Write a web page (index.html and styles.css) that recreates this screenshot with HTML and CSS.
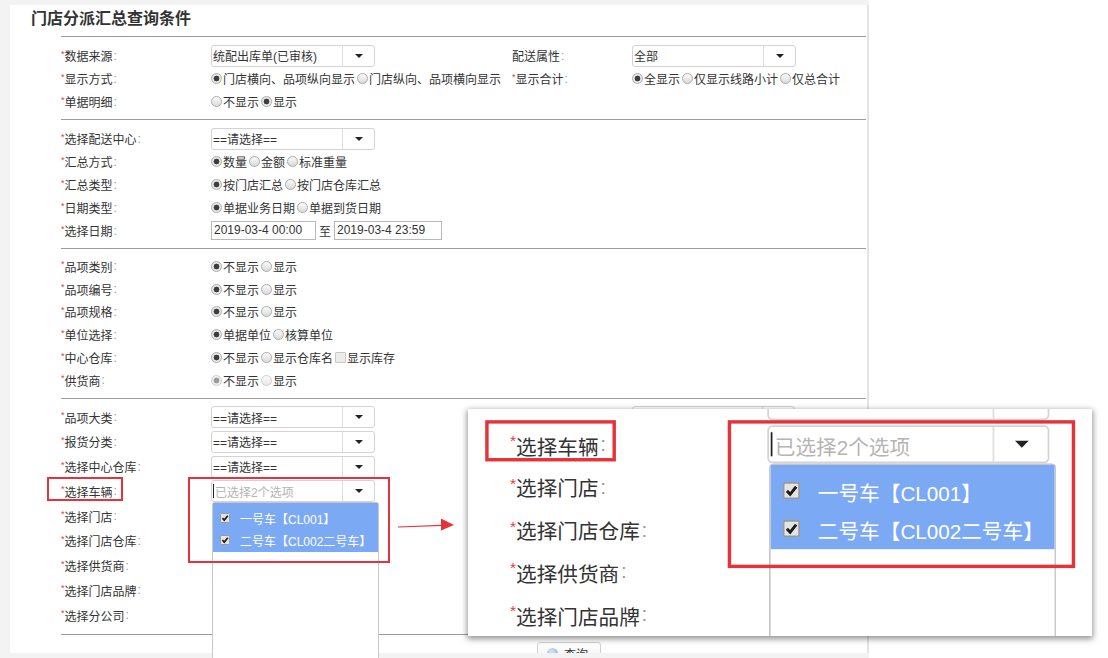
FILE: index.html
```html
<!DOCTYPE html>
<html lang="zh-CN">

<head>
    <meta charset="utf-8">
    <title>门店分派汇总查询条件</title>
    <link rel="stylesheet" href="styles.css">
</head>

<body>
    <div class="page">
        <div class="panel">
            <h1 class="panel-title">门店分派汇总查询条件</h1>

            <div class="section sec-a">
                <div class="row">
                    <span class="label"><i>*</i>数据来源<em>:</em></span>
                    <div class="field">
                        <div class="combo"><span class="combo-text">统配出库单(已审核)</span><span class="combo-btn"><b class="caret"></b></span></div>
                    </div>
                    <span class="label">配送属性<em>:</em></span>
                    <div class="field">
                        <div class="combo"><span class="combo-text">全部</span><span class="combo-btn"><b class="caret"></b></span></div>
                    </div>
                </div>
                <div class="row">
                    <span class="label"><i>*</i>显示方式<em>:</em></span>
                    <div class="field">
                        <span class="radio on">门店横向、品项纵向显示</span>
                        <span class="radio">门店纵向、品项横向显示</span>
                    </div>
                    <span class="label"><i>*</i>显示合计<em>:</em></span>
                    <div class="field">
                        <span class="radio on">全显示</span>
                        <span class="radio">仅显示线路小计</span>
                        <span class="radio">仅总合计</span>
                    </div>
                </div>
                <div class="row">
                    <span class="label"><i>*</i>单据明细<em>:</em></span>
                    <div class="field">
                        <span class="radio">不显示</span>
                        <span class="radio on">显示</span>
                    </div>
                </div>
            </div>

            <div class="section sec-b">
                <div class="row">
                    <span class="label"><i>*</i>选择配送中心<em>:</em></span>
                    <div class="field">
                        <div class="combo"><span class="combo-text">==请选择==</span><span class="combo-btn"><b class="caret"></b></span></div>
                    </div>
                </div>
                <div class="row">
                    <span class="label"><i>*</i>汇总方式<em>:</em></span>
                    <div class="field">
                        <span class="radio on">数量</span>
                        <span class="radio">金额</span>
                        <span class="radio">标准重量</span>
                    </div>
                </div>
                <div class="row">
                    <span class="label"><i>*</i>汇总类型<em>:</em></span>
                    <div class="field">
                        <span class="radio on">按门店汇总</span>
                        <span class="radio">按门店仓库汇总</span>
                    </div>
                </div>
                <div class="row">
                    <span class="label"><i>*</i>日期类型<em>:</em></span>
                    <div class="field">
                        <span class="radio on">单据业务日期</span>
                        <span class="radio">单据到货日期</span>
                    </div>
                </div>
                <div class="row">
                    <span class="label"><i>*</i>选择日期<em>:</em></span>
                    <div class="field">
                        <span class="datebox">2019-03-4 00:00</span>
                        <span class="to">至</span>
                        <span class="datebox wide">2019-03-4 23:59</span>
                    </div>
                </div>
            </div>

            <div class="section sec-c">
                <div class="row">
                    <span class="label"><i>*</i>品项类别<em>:</em></span>
                    <div class="field"><span class="radio on">不显示</span><span class="radio">显示</span></div>
                </div>
                <div class="row">
                    <span class="label"><i>*</i>品项编号<em>:</em></span>
                    <div class="field"><span class="radio on">不显示</span><span class="radio">显示</span></div>
                </div>
                <div class="row">
                    <span class="label"><i>*</i>品项规格<em>:</em></span>
                    <div class="field"><span class="radio on">不显示</span><span class="radio">显示</span></div>
                </div>
                <div class="row">
                    <span class="label"><i>*</i>单位选择<em>:</em></span>
                    <div class="field"><span class="radio on">单据单位</span><span class="radio">核算单位</span></div>
                </div>
                <div class="row">
                    <span class="label"><i>*</i>中心仓库<em>:</em></span>
                    <div class="field">
                        <span class="radio on">不显示</span><span class="radio">显示仓库名</span><span class="check">显示库存</span>
                    </div>
                </div>
                <div class="row">
                    <span class="label"><i>*</i>供货商<em>:</em></span>
                    <div class="field"><span class="radio on disabled">不显示</span><span class="radio disabled">显示</span></div>
                </div>
            </div>

            <div class="section sec-d">
                <div class="row">
                    <span class="label"><i>*</i>品项大类<em>:</em></span>
                    <div class="field">
                        <div class="combo"><span class="combo-text">==请选择==</span><span class="combo-btn"><b class="caret"></b></span></div>
                    </div>
                    <span class="label"><i>*</i>品项小类<em>:</em></span>
                    <div class="field">
                        <div class="combo short"><span class="combo-text">==请选择==</span><span class="combo-btn"><b class="caret"></b></span></div>
                    </div>
                </div>
                <div class="row">
                    <span class="label"><i>*</i>报货分类<em>:</em></span>
                    <div class="field">
                        <div class="combo"><span class="combo-text">==请选择==</span><span class="combo-btn"><b class="caret"></b></span></div>
                    </div>
                </div>
                <div class="row">
                    <span class="label"><i>*</i>选择中心仓库<em>:</em></span>
                    <div class="field">
                        <div class="combo"><span class="combo-text">==请选择==</span><span class="combo-btn"><b class="caret"></b></span></div>
                    </div>
                </div>
                <div class="row">
                    <span class="label"><i>*</i>选择车辆<em>:</em></span>
                    <div class="field">
                        <div class="combo">
                            <span class="combo-text placeholder"><span class="cursor"></span>已选择2个选项</span><span class="combo-btn"><b class="caret"></b></span>
                            <div class="menu">
                                <div class="menu-list">
                                    <div class="menu-item"><svg class="tick" viewBox="0 0 10 10"><rect x=".5" y=".5" width="9" height="9" rx="1" fill="#e4e4e4" stroke="#9a9a9a"/><path d="M2.4 5.1 4.3 7.1 7.8 2.7" fill="none" stroke="#1d1d1d" stroke-width="1.7"/></svg>一号车【CL001】</div>
                                    <div class="menu-item"><svg class="tick" viewBox="0 0 10 10"><rect x=".5" y=".5" width="9" height="9" rx="1" fill="#e4e4e4" stroke="#9a9a9a"/><path d="M2.4 5.1 4.3 7.1 7.8 2.7" fill="none" stroke="#1d1d1d" stroke-width="1.7"/></svg>二号车【CL002二号车】</div>
                                </div>
                            </div>
                        </div>
                    </div>
                    <span class="mark mark-label"></span>
                    <span class="mark mark-field"></span>
                </div>
                <div class="row"><span class="label"><i>*</i>选择门店<em>:</em></span></div>
                <div class="row"><span class="label"><i>*</i>选择门店仓库<em>:</em></span></div>
                <div class="row"><span class="label"><i>*</i>选择供货商<em>:</em></span></div>
                <div class="row"><span class="label"><i>*</i>选择门店品牌<em>:</em></span></div>
                <div class="row"><span class="label"><i>*</i>选择分公司<em>:</em></span></div>
            </div>

            <div class="actions">
                <button class="btn"><span class="btn-icon"></span>查询</button>
            </div>
        </div>
    </div>

    <!-- arrow pointing at the zoomed copy -->
    <svg class="arrow" width="60" height="16" viewBox="0 0 60 16">
        <line x1="1" y1="11" x2="45" y2="9.3" stroke="#e5333b" stroke-width="1.2"/>
        <polygon points="44,2.5 57,9 44,14.5" fill="#e5333b"/>
    </svg>

    <!-- zoomed copy of the vehicle picker -->
    <div class="zoom">
        <div class="zoom-src section sec-d">
            <div class="row">
                <span class="label"></span>
                <div class="field">
                    <div class="combo"><span class="combo-text"></span><span class="combo-btn"></span></div>
                </div>
            </div>
            <div class="row">
                <span class="label"><i>*</i>选择车辆<em>:</em></span>
                <div class="field">
                    <div class="combo">
                        <span class="combo-text placeholder"><span class="cursor"></span>已选择2个选项</span><span class="combo-btn"><b class="caret"></b></span>
                        <div class="menu">
                            <div class="menu-list">
                                <div class="menu-item"><svg class="tick" viewBox="0 0 10 10"><rect x=".5" y=".5" width="9" height="9" rx="1" fill="#e4e4e4" stroke="#9a9a9a"/><path d="M2.4 5.1 4.3 7.1 7.8 2.7" fill="none" stroke="#1d1d1d" stroke-width="1.7"/></svg>一号车【CL001】</div>
                                <div class="menu-item"><svg class="tick" viewBox="0 0 10 10"><rect x=".5" y=".5" width="9" height="9" rx="1" fill="#e4e4e4" stroke="#9a9a9a"/><path d="M2.4 5.1 4.3 7.1 7.8 2.7" fill="none" stroke="#1d1d1d" stroke-width="1.7"/></svg>二号车【CL002二号车】</div>
                            </div>
                        </div>
                    </div>
                </div>
                <span class="mark mark-label"></span>
                <span class="mark mark-field"></span>
            </div>
            <div class="row"><span class="label"><i>*</i>选择门店<em>:</em></span></div>
            <div class="row"><span class="label"><i>*</i>选择门店仓库<em>:</em></span></div>
            <div class="row"><span class="label"><i>*</i>选择供货商<em>:</em></span></div>
            <div class="row"><span class="label"><i>*</i>选择门店品牌<em>:</em></span></div>
        </div>
    </div>
</body>

</html>
```

FILE: styles.css
```css
body {
    position: relative;
    margin: 0;
    height: 658px;
    overflow: hidden;
    background: #fff;
    font-family: "Liberation Sans", "Noto Sans CJK SC", sans-serif;
    font-size: 12px;
    color: #333;
}

.page {
    width: 869px;
    height: 658px;
    padding: 5px 0 0 10px;
    box-sizing: border-box;
    overflow: hidden;
    background: #f3f3f3;
}

.panel {
    width: 857px;
    background: #fff;
    border-right: 2px solid #e4e4e4;
}

.panel-title {
    margin: 0;
    height: 31px;
    padding-left: 21px;
    line-height: 28px;
    font-size: 16px;
    font-weight: bold;
    color: #333;
}

.section {
    margin: 0 1px 0 51px;
    border-top: 1px solid #9c9c9c;
}

.sec-a { padding: 7px 0 6px; }
.sec-b { padding: 7px 0 6px; }
.sec-c { padding: 6px 0 6px; }
.sec-d { padding: 6px 0 6px; }

.row {
    position: relative;
    display: grid;
    grid-template-columns: 150px 301px 120px 1fr;
    align-items: center;
    height: 23px;
}

.sec-c .row { height: 22.8px; }
.sec-d .row { height: 24.75px; }

.label,
.field {
    display: flex;
    align-items: center;
    white-space: nowrap;
}

.label i {
    position: relative;
    top: -2px;
    font-style: normal;
    font-size: 9px;
    color: #e4393c;
}

.label em {
    margin-left: 1px;
    font-style: normal;
    color: #999;
}

/* combo box */
.combo {
    position: relative;
    display: flex;
    width: 164px;
    height: 22px;
    border: 1px solid #d3d3d3;
    border-radius: 3px;
    box-sizing: border-box;
    background: #fff;
}

.combo.short { width: 163px; }

.combo-text {
    flex: 1;
    display: flex;
    align-items: center;
    padding-left: 1px;
    overflow: hidden;
}

.combo-text.placeholder { color: #b4b4b4; }

.cursor {
    width: 1px;
    height: 14px;
    margin-right: 1px;
    background: #222;
}

.combo-btn {
    display: flex;
    align-items: center;
    justify-content: center;
    width: 31px;
    border-left: 1px solid #dedede;
}

.caret {
    border-left: 4px solid transparent;
    border-right: 4px solid transparent;
    border-top: 4px solid #222;
}

/* dropdown of the multi select */
.menu {
    position: absolute;
    left: 0;
    top: 21px;
    width: 167px;
    height: 180px;
    border: 1px solid #c9c9c9;
    border-bottom: none;
    border-radius: 3px 3px 0 0;
    box-sizing: border-box;
    background: #fff;
    z-index: 2;
}

.menu-list {
    padding: 4px 0 1px;
    background: #7ca9f4;
}

.menu-item {
    display: flex;
    align-items: center;
    gap: 10px;
    height: 22px;
    padding-left: 7px;
    color: #fff;
}

.tick {
    width: 10px;
    height: 10px;
}

/* radio / checkbox */
.radio,
.check {
    display: inline-flex;
    align-items: center;
    margin-right: 2px;
}

.radio::before,
.check::before {
    content: "";
    width: 11px;
    height: 11px;
    margin-right: 1px;
    border: 1px solid #ababab;
    border-radius: 50%;
    box-sizing: border-box;
    background: linear-gradient(#fbfbfb, #dadada);
}

.check::before {
    border-radius: 1px;
    border-color: #c8c8c8;
    background: #ececec;
}

.radio.on::before {
    background: radial-gradient(circle, #3d3d3d 0 2.6px, #e9e9e9 3.2px);
}

.radio.disabled::before {
    border-color: #cfcfcf;
    background: linear-gradient(#fbfbfb, #e8e8e8);
}

.radio.on.disabled::before {
    background: radial-gradient(circle, #9a9a9a 0 2.6px, #eeeeee 3.2px);
}

/* date range */
.datebox {
    width: 105px;
    height: 19px;
    padding-left: 2px;
    border: 1px solid #b9b9b9;
    box-sizing: border-box;
    line-height: 17px;
}

.datebox.wide { width: 108px; }

.to { margin: 0 3px; }

/* annotations */
.mark {
    position: absolute;
    border: 2px solid #e5333b;
    box-sizing: border-box;
    z-index: 3;
}

.mark-label {
    left: -14px;
    top: -2px;
    width: 76px;
    height: 24px;
}

.mark-field {
    left: 127px;
    top: -2px;
    width: 202px;
    height: 86px;
}

.actions {
    height: 11px;
    margin-left: 51px;
    padding: 7px 0 0 476px;
    border-top: 1px solid #9c9c9c;
    overflow: hidden;
}

.btn {
    display: inline-flex;
    align-items: center;
    gap: 6px;
    height: 24px;
    padding: 0 12px 0 9px;
    border: 1px solid #d0d0d0;
    border-radius: 3px;
    background: linear-gradient(#fff, #eee);
    font-family: inherit;
    font-size: 12px;
    color: #333;
}

.btn-icon {
    width: 11px;
    height: 11px;
    border-radius: 50%;
    background: radial-gradient(circle at 40% 35%, #d6e6fb, #7ea5d8);
}

.arrow {
    position: absolute;
    left: 397px;
    top: 516px;
}

/* zoomed inset */
.zoom {
    position: absolute;
    left: 468px;
    top: 409px;
    width: 624px;
    height: 227px;
    overflow: hidden;
    background: #fff;
    box-shadow: 0 2px 6px 1px rgba(0, 0, 0, 0.42);
    z-index: 5;
}

.zoom-src {
    width: 420px;
    margin: 0;
    padding: 0 0 0 24.4px;
    border-top: none;
    transform-origin: 0 0;
    transform: scale(1.72) translateY(-16.5px);
}
```
